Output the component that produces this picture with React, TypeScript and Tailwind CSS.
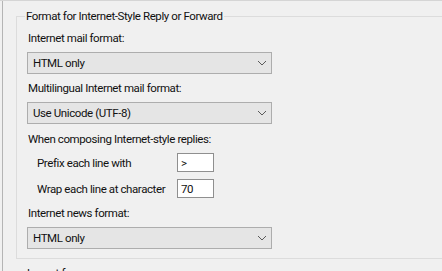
import * as React from "react";

function Chevron() {
  return (
    <svg width="10" height="6" viewBox="0 0 10 6" className="text-[#5a5a5a]">
      <polyline points="1,1 5,5 9,1" fill="none" stroke="currentColor" strokeWidth="1" />
    </svg>
  );
}

function ComboBox({ value }: { value: string }) {
  return (
    <div className="flex h-[22px] w-[245px] items-center justify-between border border-[#adadad] bg-[#e5e5e5] pl-[5px] pr-[4px]">
      <span className="leading-[16px]">{value}</span>
      <Chevron />
    </div>
  );
}

function TextBox({ value }: { value: string }) {
  return (
    <div className="flex h-[19px] w-[37px] items-center border border-[#8f8f8f] bg-white pl-[3px] leading-[16px]">
      {value}
    </div>
  );
}

export default function App() {
  return (
    <div
      className="h-[271px] w-[442px] overflow-hidden border-t border-[#d5d5d5] bg-[#f0f0f0] text-[11.5px] tracking-[-0.4px] text-[#111]"
      style={{ fontFamily: 'Roboto, "Noto Sans", sans-serif' }}
    >
      <div className="ml-[2px] h-full border-l border-[#b4b4b4] pl-[13px] pt-[15px]">
        <div className="border-b border-l border-[#dcdcdc] pb-[9px] pl-[10px]">
          <div className="-ml-[10px] flex items-start">
            <span className="h-px w-[8px] bg-[#dcdcdc]" />
            <span className="-mt-[7px] px-[1px] leading-[14px]">Format for Internet-Style Reply or Forward</span>
            <span className="h-px flex-1 bg-[#dcdcdc]" />
          </div>

          <div className="mt-[7px] ml-px leading-[16px]">Internet mail format:</div>
          <div className="mt-[6px]">
            <ComboBox value="HTML only" />
          </div>

          <div className="mt-[6px] ml-px leading-[16px]">Multilingual Internet mail format:</div>
          <div className="mt-[6px]">
            <ComboBox value="Use Unicode (UTF-8)" />
          </div>

          <div className="mt-[7px] ml-px leading-[16px]">When composing Internet-style replies:</div>
          <div className="mt-[6px] grid grid-cols-[140px_37px] items-center gap-y-[7px] pl-[10px]">
            <span className="whitespace-nowrap leading-[16px]">Prefix each line with</span>
            <TextBox value=">" />
            <span className="whitespace-nowrap leading-[16px]">Wrap each line at character</span>
            <TextBox value="70" />
          </div>

          <div className="mt-[7px] ml-px leading-[16px]">Internet news format:</div>
          <div className="mt-[6px]">
            <ComboBox value="HTML only" />
          </div>
        </div>
        <div className="mt-[6px] ml-[11px] leading-[16px]">Layout for</div>
      </div>
    </div>
  );
}
